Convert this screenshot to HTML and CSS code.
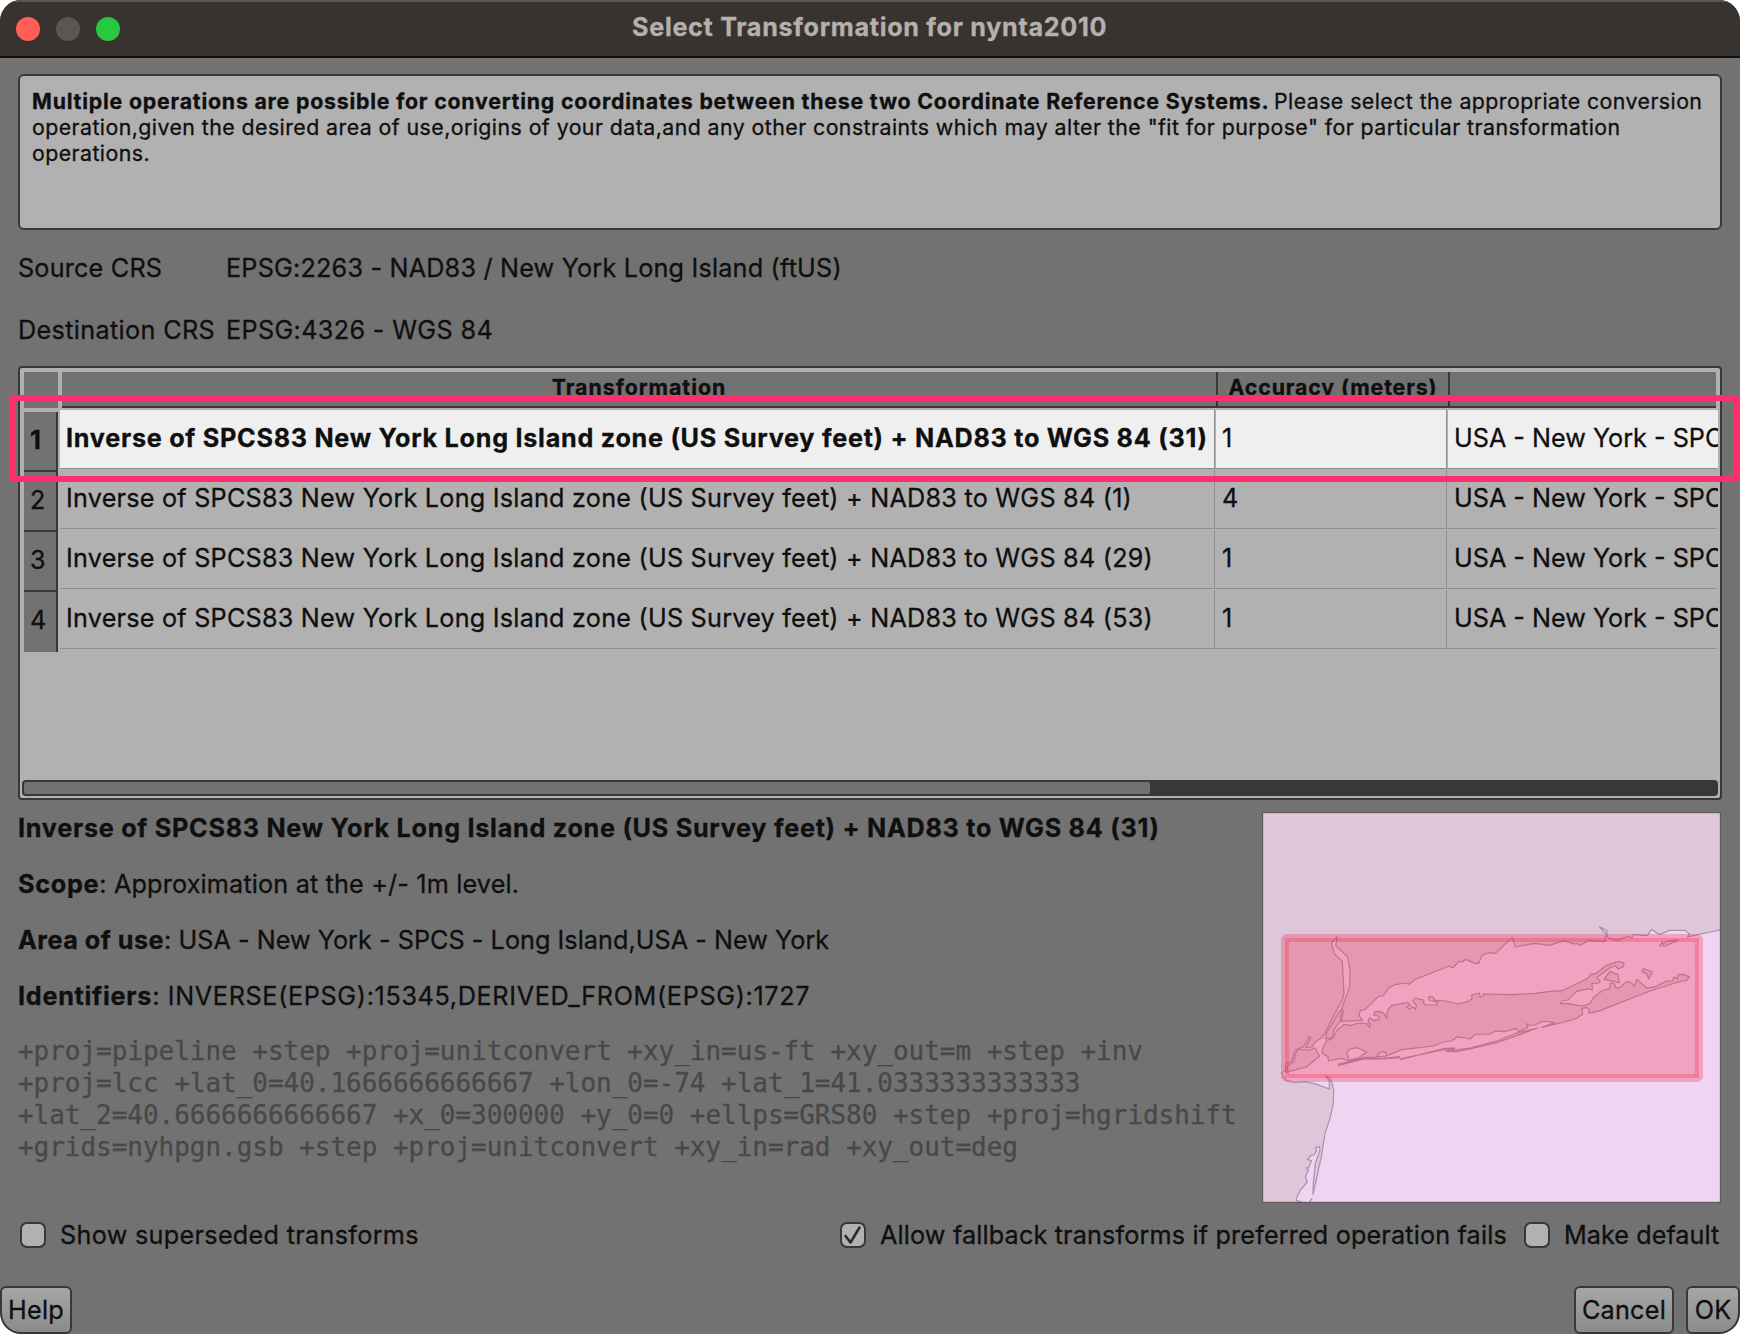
FILE: index.html
```html
<!DOCTYPE html>
<html lang="en">
<head>
<meta charset="utf-8">
<title>Select Transformation for nynta2010</title>
<link rel="stylesheet" href="styles.css">
</head>
<body>
<main class="dialog">
  <header class="titlebar">
    <div class="lights"><i class="light close"></i><i class="light minimise"></i><i class="light zoom"></i></div>
    <h1>Select Transformation for nynta2010</h1>
  </header>

  <section class="notice">
    <div class="line"><b class="lead">Multiple operations are possible for converting coordinates between these two Coordinate Reference Systems.</b><span>Please select the appropriate conversion</span></div>
    <div class="line"><span>operation,given the desired area of use,origins of your data,and any other constraints which may alter the "fit for purpose" for particular transformation</span></div>
    <div class="line"><span>operations.</span></div>
  </section>

  <dl class="crs">
    <dt class="source">Source CRS</dt><dd class="source">EPSG:2263 - NAD83 / New York Long Island (ftUS)</dd>
    <dt>Destination CRS</dt><dd>EPSG:4326 - WGS 84</dd>
  </dl>

  <section class="table">
    <div class="head">
      <div class="corner"></div>
      <div class="cols">
        <div class="col">Transformation</div>
        <div class="col accuracy">Accuracy (meters)</div>
        <div class="col"></div>
      </div>
    </div>
    <div class="rows">
      <div class="nums"><div class="num current">1</div><div class="num">2</div><div class="num">3</div><div class="num">4</div></div>
      <div class="cells">
        <div class="row selected"><div class="cell"><b>Inverse of SPCS83 New York Long Island zone (US Survey feet) + NAD83 to WGS 84 (31)</b></div><div class="cell">1</div><div class="cell area">USA - New York - SPCS</div></div>
        <div class="row"><div class="cell">Inverse of SPCS83 New York Long Island zone (US Survey feet) + NAD83 to WGS 84 (1)</div><div class="cell">4</div><div class="cell area">USA - New York - SPCS</div></div>
        <div class="row"><div class="cell">Inverse of SPCS83 New York Long Island zone (US Survey feet) + NAD83 to WGS 84 (29)</div><div class="cell">1</div><div class="cell area">USA - New York - SPCS</div></div>
        <div class="row"><div class="cell">Inverse of SPCS83 New York Long Island zone (US Survey feet) + NAD83 to WGS 84 (53)</div><div class="cell">1</div><div class="cell area">USA - New York - SPCS</div></div>
      </div>
    </div>
    <div class="scrollbar"><div class="thumb"></div></div>
    <div class="marker"></div>
  </section>

  <section class="details">
    <div class="info">
      <p><b>Inverse of SPCS83 New York Long Island zone (US Survey feet) + NAD83 to WGS 84 (31)</b></p>
      <p class="scope"><b>Scope</b><span>: Approximation at the +/- 1m level.</span></p>
      <p class="use"><b>Area of use</b><span>: USA - New York - SPCS - Long Island,USA - New York</span></p>
      <p class="ids"><b>Identifiers</b><span>: INVERSE(EPSG):15345,DERIVED_FROM(EPSG):1727</span></p>
      <pre class="proj">+proj=pipeline +step +proj=unitconvert +xy_in=us-ft +xy_out=m +step +inv
+proj=lcc +lat_0=40.1666666666667 +lon_0=-74 +lat_1=41.0333333333333
+lat_2=40.6666666666667 +x_0=300000 +y_0=0 +ellps=GRS80 +step +proj=hgridshift
+grids=nyhpgn.gsb +step +proj=unitconvert +xy_in=rad +xy_out=deg</pre>
    </div>
    <svg class="map" viewBox="36 36 1377 1173">
      <rect class="sea" x="36" y="36" width="1377" height="1173"/>
      <g class="land">
        <path d="M20 20H1430V385L1312 411 1318 402 1306 391H1258L1228 404 1205 388 1191 407 1150 403 1146 414 1134 409 1101 422 1075 414 1068 403 1048 380 1070 391 1072 405 1064 414 1068 420 1062 425 1018 421 990 436 984 431 974 432 940 422 899 436 853 430 796 441 787 412 736 460 714 458 695 468 686 490H675L648 478 636 486 628 483 608 504 598 498 496 538 477 553 470 549 434 554 417 563 399 588 385 589 345 629 331 631 327 646 337 661 274 664 280 630 275 627 299 560 300 508 292 470 257 437 262 410 244 430 254 462 277 484 282 580 277 600 240 668 219 710 196 725 187 741 167 743 182 713 178 710 161 740 135 750 125 785 108 792 106 812 94 820 108 840 132 848 165 845 200 853 238 867V843L227 828 242 836 251 870 250 910 240 955 225 1000 214 1070 189 1184 190 1150 196 1090 210 1050 208 1040 196 1043 200 1052 192 1065 185 1065 172 1078 184 1082 178 1100 169 1104 176 1108 166 1130 172 1146 150 1172 139 1195V1201L155 1206V1230H20Z"/>
        <path d="M178 1206L187 1195"/>
        <path d="M227 717L229 700 268 634 275 628 270 664 252 690 248 711Z"/>
        <path d="M148 748L175 750 195 744 209 768 170 800 110 817 113 797 130 787 140 752Z"/>
        <path d="M218 745L230 722 247 716 262 690 283 673 300 677 326 669 350 671 359 682 361 673 354 664 358 653 372 662 388 658 386 648 371 645 375 635 389 634 402 640 410 655 413 632 424 616 474 607 481 615 470 622 478 628 488 620 497 628 499 615 488 603 494 594 522 601 520 610 530 615H559L562 606 536 600 537 590 549 591 555 601 590 603 625 612 655 604 666 597 665 585 689 579 690 591 699 590 700 582 790 584 855 580 900 574 937 572 1014 535 1022 523 1039 520 1070 496 1107 484 1122 489 1120 500 1105 507 1097 498 1083 501 1040 533 1051 543 1046 549 1026 551 1027 570 1017 566 980 574 953 600 937 603 931 611H955L998 618 1020 610 1029 594 1058 571 1080 566V549L1094 552 1097 562 1109 564 1130 544 1145 549 1152 559 1161 538 1190 564 1215 560 1250 543H1268L1272 531 1282 537 1284 524 1298 523 1318 530 1310 541 1285 546 1200 573 1050 632 1016 640 1018 628 1008 622 995 626 998 643 980 655 932 669 875 682 916 668 878 663 855 675 835 676 829 671 833 683 806 695 798 685 765 695 735 693 720 702 676 703 661 717 622 710 604 723 580 726 550 738 455 749 408 768 345 774 297 783 275 775 235 783 234 770 216 760Z"/>
        <path class="bay" d="M297 780L290 757 300 747 323 743 350 757 325 774ZM408 768V757L395 755 384 761 382 769Z"/>
        <path d="M265 793L345 772 400 775 449 770V773L400 777 345 776 266 796Z"/>
        <path d="M451 779L585 745 614 744 590 750 585 748 454 776Z"/>
        <path d="M588 754L614 746 606 752 660 744 740 723 800 699 864 684 740 728 660 747 620 755Z"/>
        <path d="M1080 514L1104 524 1108 548 1062 538Z"/>
        <path d="M1180 506L1207 516 1196 537 1190 521 1176 515Z"/>
        <path d="M1285 420L1250 424 1240 433 1237 426 1228 438 1246 438Z"/>
      </g>
      <rect class="extent-fill" x="105" y="414" width="1242" height="420"/>
      <rect class="extent-line" x="105" y="414" width="1242" height="420"/>
      <rect class="frame" x="37.5" y="37.5" width="1374" height="1170"/>
    </svg>
  </section>

  <div class="options">
    <label><i class="box"></i>Show superseded transforms</label>
    <label class="fallback"><i class="box"><svg class="tick" viewBox="0 0 22 22"><path d="M3.5 12L8.5 18.5 17.5 3.5"/></svg></i>Allow fallback transforms if preferred operation fails</label>
    <label class="default"><i class="box"></i>Make default</label>
  </div>

  <footer class="buttons">
    <button class="btn help">Help</button>
    <button class="btn cancel">Cancel</button>
    <button class="btn ok">OK</button>
  </footer>
</main>
</body>
</html>
```
FILE: styles.css
```css
* { box-sizing: border-box; margin: 0; padding: 0; }
body { width: 1740px; height: 1334px; overflow: hidden; background: #fff; font: 25.2px Inter, "Liberation Sans", sans-serif; color: #0f0f0f; -webkit-text-stroke: 0.3px; }
b { font-weight: 700; letter-spacing: .73px; }
span, b { white-space: pre; }
.dialog { width: 1740px; height: 1334px; background: #727272; border-radius: 21px; overflow: hidden; display: flex; flex-direction: column; }

.titlebar { height: 58px; flex: none; background: #393330; border-top: 2px solid #5b5654; border-bottom: 2px solid #111; display: grid; grid-template-columns: 632px 1fr; align-items: center; }
.lights { display: flex; gap: 16px; padding-left: 16px; }
.light { width: 24px; height: 24px; border-radius: 50%; }
.close { background: #ff5f57; }
.minimise { background: #5b5654; }
.zoom { background: #28c840; }
.titlebar h1 { font-size: 25.2px; line-height: 50px; height: 54px; font-weight: 700; color: #b5b0ad; white-space: pre; letter-spacing: .69px; }

.notice { margin: 16px 18px 0; height: 156px; flex: none; background: #b1b1b1; border: 2px solid #383838; border-radius: 6px; padding: 12px 0 0 12px; font-size: 21.3px; letter-spacing: .45px; }
.line { height: 26px; line-height: 26px; display: flex; }
.lead { width: 1242px; letter-spacing: .8px; }

.crs { margin: 7px 18px 0; display: grid; grid-template-columns: 208px 1fr; grid-auto-rows: 62px; line-height: 62px; letter-spacing: .35px; white-space: nowrap; }
.source { letter-spacing: .2px; }

.table { position: relative; margin: 5px 18px 0; height: 434px; flex: none; background: #b1b1b1; border: 2px solid #383838; border-radius: 4px; display: flex; flex-direction: column; padding: 4px 2px 2px; }
.head { display: flex; gap: 4px; height: 36px; padding: 0 2px; }
.corner { width: 34px; background: #727272; }
.cols { flex: 1; display: grid; grid-template-columns: 1154px 232px 1fr; background: #727272; border-bottom: 2px solid #383838; font-size: 21.3px; font-weight: 700; line-height: 30px; text-align: center; letter-spacing: 1px; }
.col + .col { border-left: 2px solid #383838; }
.accuracy { letter-spacing: .88px; }
.rows { display: flex; gap: 2px; height: 242px; margin-top: 2px; padding-left: 2px; }
.nums { width: 34px; padding-top: 2px; }
.num { height: 60px; background: #727272; border-right: 2px solid #383838; border-bottom: 2px solid #383838; padding-left: 6px; line-height: 56px; }
.num:last-child { border-bottom: 0; }
.current { font-weight: 700; }
.cells { flex: 1; min-width: 0; }
.row { display: grid; grid-template-columns: 1155px 232px 271px; height: 60px; background: linear-gradient(#8f8f8f, #8f8f8f) 0 58px / 1657px 1px no-repeat; }
.cell { height: 59px; line-height: 56px; padding-left: 6px; border-right: 1px solid #8f8f8f; overflow: hidden; white-space: pre; letter-spacing: .23px; }
.cell:last-child { border-right: 0; }
.cell + .cell { padding-left: 7px; }
.area { letter-spacing: 0; }
.selected .cell { background: #efefef; height: 58px; }
.selected .cell + .cell { border-left: 1px solid #b1b1b1; padding-left: 6px; }
.scrollbar { height: 16px; margin-top: auto; background: #383838; border-radius: 4px; padding: 2px; }
.thumb { width: 1126px; height: 12px; background: #727272; border-radius: 2px; }
.marker { position: absolute; left: -11px; top: 27px; width: 1730px; height: 87px; border: 6px solid #ff2f6d; border-radius: 3px; }

.details { display: flex; justify-content: space-between; margin: 0 19px 0 18px; height: 415px; flex: none; }
.info p { height: 56px; line-height: 56px; display: flex; }
.scope { letter-spacing: .17px; }
.use { letter-spacing: .04px; }
.use b { letter-spacing: .5px; }
.ids { letter-spacing: .655px; }
.proj { margin-top: 11px; font: 26px/32px "DejaVu Sans Mono", monospace; letter-spacing: -.03px; color: #484848; }
.map { width: 459px; height: 391px; margin-top: 12px; flex: none; display: block; }
.sea { fill: #efd5f2; }
.land { fill: #dfc6da; stroke: #a891ab; stroke-width: 3.6; stroke-linejoin: round; }
.bay { fill: #efd5f2; }
.extent-fill { fill: rgba(243, 31, 64, .27); }
.extent-line { fill: none; stroke: rgba(243, 31, 64, .27); stroke-width: 24; stroke-linejoin: bevel; }
.frame { fill: none; stroke: #5c5a5c; stroke-width: 4; }

.options { height: 40px; flex: none; display: flex; padding: 0 20px; line-height: 41px; letter-spacing: .31px; }
.options label { display: flex; align-items: center; gap: 14px; white-space: nowrap; }
.box { width: 26px; height: 26px; flex: none; border: 2px solid #383838; border-radius: 7px; background: #b1b1b1; }
.tick { display: block; width: 22px; height: 22px; fill: none; stroke: #2b2b2b; stroke-width: 2.6; stroke-linecap: round; stroke-linejoin: round; }
.fallback { margin-left: auto; width: 684px; letter-spacing: .16px; }
.default { width: 196px; letter-spacing: .05px; }

.buttons { display: flex; margin-top: 31px; height: 48px; flex: none; }
.btn { height: 48px; border: 2px solid #383838; border-radius: 6px; background: linear-gradient(#a6a6a6, #8b8b8b); font: inherit; color: inherit; line-height: 44px; letter-spacing: .25px; -webkit-text-stroke: inherit; }
.help { width: 72px; margin-right: auto; border-bottom-left-radius: 21px; }
.cancel { width: 100px; margin-right: 12px; }
.ok { width: 54px; border-bottom-right-radius: 21px; }
```
